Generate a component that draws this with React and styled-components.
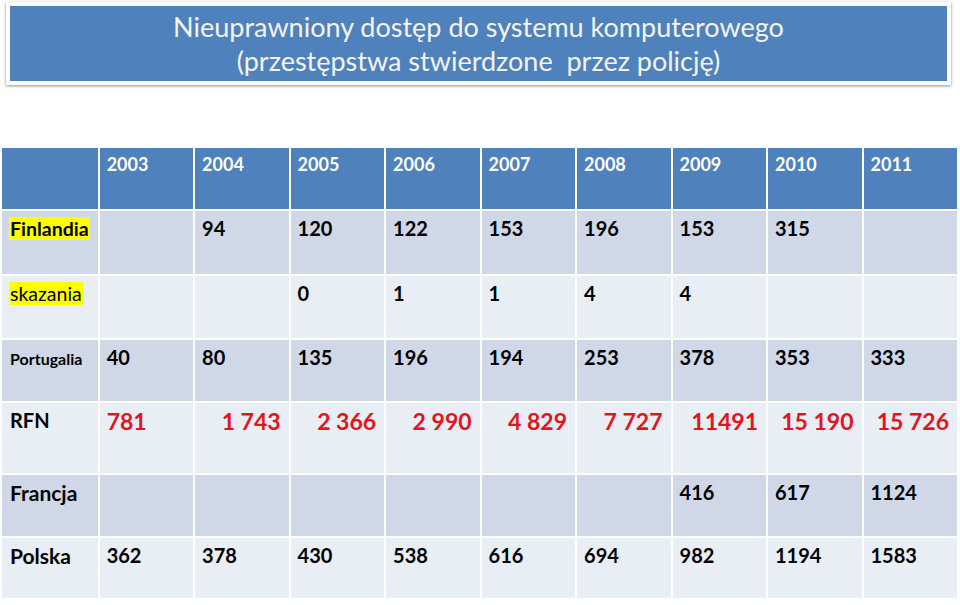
import React from 'react';
import styled, { createGlobalStyle } from 'styled-components';

const GlobalStyle = createGlobalStyle`
    body {
        margin: 0;
        background: #ffffff;
        font-family: Lato, "Open Sans", sans-serif;
    }
`;

const Page = styled.div`
    width: 960px;
    height: 605px;
    padding-top: 2px;
    box-sizing: border-box;
    overflow: hidden;
`;

const TitleBox = styled.div`
    margin: 0 9px 0 6px;
    border: 4px solid #ffffff;
    background: #4f81bd;
    box-shadow: 0 1px 3px rgba(0, 0, 0, 0.45);
    height: 75px;
    display: flex;
    flex-direction: column;
    justify-content: center;
    align-items: center;
`;

const TitleLine = styled.div`
    color: #f4f4f4;
    font-size: 27px;
    line-height: 34px;
    white-space: pre;
`;

const Table = styled.div`
    margin: 63px 3px 0 2px;
    display: grid;
    grid-template-columns: repeat(10, 1fr);
    grid-template-rows: 61px 63px 62px 61px 70px 61px 60px;
    gap: 2px;
`;

const tones = {
    head: '#4f81bd',
    dark: '#d0d8e8',
    light: '#e9edf4',
};

const Cell = styled.div`
    background: ${(p) => tones[p.$tone]};
    color: ${(p) => (p.$tone === 'head' ? '#ffffff' : p.$red ? '#e3141b' : '#000000')};
    font-weight: 700;
    font-size: ${(p) => p.$size || 20}px;
    line-height: 1.2;
    padding: ${(p) => (p.$tone === 'head' ? 6 : 5)}px 8px 0 7px;
    text-align: ${(p) => (p.$right ? 'right' : 'left')};
    white-space: nowrap;
`;

const Label = styled.span`
    background: ${(p) => (p.$mark ? '#ffff00' : 'transparent')};
    font-weight: ${(p) => (p.$thin ? 400 : 700)};
    font-size: ${(p) => p.$size}px;
    padding: 0 1px;
`;

const years = ['2003', '2004', '2005', '2006', '2007', '2008', '2009', '2010', '2011'];

const rows = [
    { label: 'Finlandia', mark: true, labelSize: 19.5, tone: 'dark',
        values: ['', '94', '120', '122', '153', '196', '153', '315', ''] },
    { label: 'skazania', mark: true, thin: true, labelSize: 19.5, tone: 'light',
        values: ['', '', '0', '1', '1', '4', '4', '', ''] },
    { label: 'Portugalia', labelSize: 16, tone: 'dark',
        values: ['40', '80', '135', '196', '194', '253', '378', '353', '333'] },
    { label: 'RFN', labelSize: 20, tone: 'light', red: true, size: 23,
        values: ['781', '1 743', '2 366', '2 990', '4 829', '7 727', '11491', '15 190', '15 726'] },
    { label: 'Francja', labelSize: 21, tone: 'dark',
        values: ['', '', '', '', '', '', '416', '617', '1124'] },
    { label: 'Polska', labelSize: 21, tone: 'light',
        values: ['362', '378', '430', '538', '616', '694', '982', '1194', '1583'] },
];

export default function App() {
    return (
        <Page>
            <GlobalStyle />
            <TitleBox>
                <TitleLine>Nieuprawniony dostęp do systemu komputerowego</TitleLine>
                <TitleLine>(przestępstwa stwierdzone  przez policję)</TitleLine>
            </TitleBox>
            <Table>
                <Cell $tone="head" />
                {years.map((year) => (
                    <Cell key={year} $tone="head" $size={18}>{year}</Cell>
                ))}
                {rows.map((row) => (
                    <React.Fragment key={row.label}>
                        <Cell $tone={row.tone}>
                            <Label $mark={row.mark} $thin={row.thin} $size={row.labelSize}>
                                {row.label}
                            </Label>
                        </Cell>
                        {row.values.map((value, i) => (
                            <Cell
                                key={i}
                                $tone={row.tone}
                                $red={row.red}
                                $size={row.size}
                                $right={row.red && i > 0}
                            >
                                {value}
                            </Cell>
                        ))}
                    </React.Fragment>
                ))}
            </Table>
        </Page>
    );
}
